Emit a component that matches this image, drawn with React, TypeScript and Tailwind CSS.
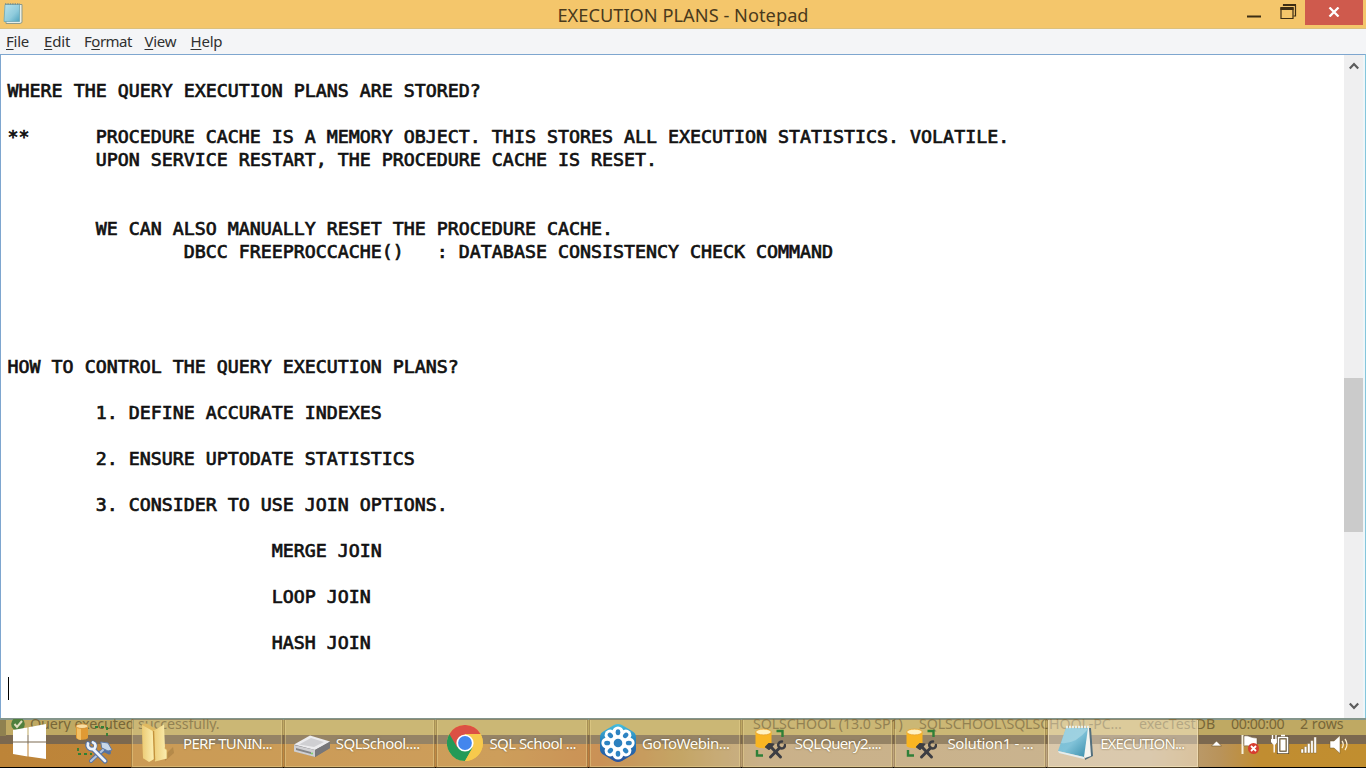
import React from "react";

const LINES = [
  "",
  "WHERE THE QUERY EXECUTION PLANS ARE STORED?",
  "",
  "**      PROCEDURE CACHE IS A MEMORY OBJECT. THIS STORES ALL EXECUTION STATISTICS. VOLATILE.",
  "        UPON SERVICE RESTART, THE PROCEDURE CACHE IS RESET.",
  "",
  "",
  "        WE CAN ALSO MANUALLY RESET THE PROCEDURE CACHE.",
  "                DBCC FREEPROCCACHE()   : DATABASE CONSISTENCY CHECK COMMAND",
  "",
  "",
  "",
  "",
  "HOW TO CONTROL THE QUERY EXECUTION PLANS?",
  "",
  "        1. DEFINE ACCURATE INDEXES",
  "",
  "        2. ENSURE UPTODATE STATISTICS",
  "",
  "        3. CONSIDER TO USE JOIN OPTIONS.",
  "",
  "                        MERGE JOIN",
  "",
  "                        LOOP JOIN",
  "",
  "                        HASH JOIN",
  "",
];

function NotepadSmall() {
  return (
    <svg width="20" height="22" viewBox="0 0 20 22">
      <defs>
        <linearGradient id="ns" x1="0" y1="0" x2="1" y2="1">
          <stop offset="0" stopColor="#b9e3ec" />
          <stop offset="0.6" stopColor="#8fcbdc" />
          <stop offset="1" stopColor="#4fa3be" />
        </linearGradient>
      </defs>
      <path d="M3 1.5h16v18l-2 1H3z" fill="#e9efe8" stroke="#8d9a8a" strokeWidth="1" />
      <path d="M2 1.5h14.5v17H1z" fill="url(#ns)" stroke="#6fa7b4" strokeWidth="0.8" />
      <path d="M2 1h15" stroke="#7b8f8c" strokeWidth="1.4" strokeDasharray="1.4 1" />
    </svg>
  );
}

function TitleBar() {
  return (
    <header className="grid h-[29px] shrink-0 grid-cols-[1fr_auto_1fr] border-b border-[#dcc07c] bg-[#f4c66b]">
      <div className="pl-[3px] pt-[3px]">
        <NotepadSmall />
      </div>
      <h1 className="pt-[2.5px] text-[18.2px] leading-[25px] tracking-[0.04px] text-[#4a3a1c]">
        EXECUTION PLANS - Notepad
      </h1>
      <div className="flex justify-end pr-[3px]">
        <svg width="52" height="25" viewBox="0 0 52 25" className="mr-[7px]" fill="none">
          <path d="M1 16.500h14" stroke="#3c2e14" strokeWidth="2" />
          <path d="M37.500 6V5h12v11h-2" stroke="#3c2e14" strokeWidth="1.2" />
          <path d="M37 5h13" stroke="#3c2e14" strokeWidth="2" />
          <path d="M35 8h12v10.500H35z" stroke="#3c2e14" strokeWidth="1.2" />
          <path d="M34.400 8.500h13.200" stroke="#3c2e14" strokeWidth="3" />
        </svg>
        <div className="flex h-[25px] w-[58px] items-center justify-center bg-[#cf5a4d]">
          <svg width="12" height="10" viewBox="0 0 12 10" className="mt-[-2px]">
            <path d="M1.500 0.500l9 9M10.500 0.500l-9 9" stroke="#fff" strokeWidth="2.3" />
          </svg>
        </div>
      </div>
    </header>
  );
}

function MenuBar() {
  return (
    <nav className="flex h-[25px] shrink-0 items-start bg-[#f4f5f7] pl-[6px] pt-[2px] text-[15px] leading-[20px] text-[#303030]">
      <span className="w-[38px] tracking-[-0.25px]"><u className="underline-offset-2">F</u>ile</span>
      <span className="w-[40px] tracking-[-0.15px]"><u className="underline-offset-2">E</u>dit</span>
      <span className="w-[60.500px] tracking-[-0.5px]">F<u className="underline-offset-2">o</u>rmat</span>
      <span className="w-[46px] tracking-[-0.3px]"><u className="underline-offset-2">V</u>iew</span>
      <span className="tracking-[-0.2px]"><u className="underline-offset-2">H</u>elp</span>
    </nav>
  );
}

function ScrollBar() {
  return (
    <div className="flex w-[19px] shrink-0 flex-col items-center bg-[#efeff0]">
      <svg width="10" height="8" viewBox="0 0 10 8" className="mt-[7px]">
        <path d="M0.800 6.500L5 2l4.200 4.500" stroke="#5c5c5c" strokeWidth="2.200" fill="none" />
      </svg>
      <div className="mt-[308px] h-[154px] w-full bg-[#cbcbcb]" />
      <svg width="10" height="8" viewBox="0 0 10 8" className="mb-[8px] mt-auto">
        <path d="M0.800 1.500L5 6l4.200-4.500" stroke="#5c5c5c" strokeWidth="2.200" fill="none" />
      </svg>
    </div>
  );
}

function FolderIcon() {
  return (
    <svg width="34" height="42" viewBox="0 0 34 42">
      <defs>
        <linearGradient id="fo" x1="0" x2="1">
          <stop offset="0" stopColor="#eccb74" />
          <stop offset="1" stopColor="#fbeeb0" />
        </linearGradient>
      </defs>
      <path d="M24 33l8-8 1 6-9 8z" fill="#8d6a33" opacity="0.350" />
      <path d="M1 2.500l5-1 8 5 0 30-5 3-7-3z" fill="#dfb961" />
      <path d="M1 3l9 5 3 2v27l-5 3-6-4z" fill="url(#fo)" />
      <path d="M12 9l11-6.500 1 24 2 1v9l-12 3z" fill="url(#fo)" />
      <path d="M12.500 9l1 29" stroke="#c2923c" strokeWidth="1.400" />
      <path d="M23.500 26l2.500 2v8.500" stroke="#d1a54e" strokeWidth="0.800" fill="none" />
    </svg>
  );
}

function DriveIcon() {
  return (
    <svg width="38" height="26" viewBox="0 0 38 26">
      <path d="M1 12L17 3l20 6v6L22 24 1 18z" fill="#777779" />
      <path d="M1 11.500L17 2.500l20 6L22 17z" fill="#ececee" />
      <path d="M6 11.500L18 5l13 4-10 5z" fill="#cfcfd2" />
      <path d="M1 12l21 5v7L1 18.500z" fill="#d0d0d3" />
      <path d="M3 15l15 4v2L3 17z" fill="#858587" />
      <path d="M22 17l15-8v6l-15 9z" fill="#77777a" />
      <circle cx="19" cy="20.500" r="1" fill="#77d265" />
    </svg>
  );
}

function ChromeIcon() {
  return (
    <svg width="36" height="36" viewBox="0 0 36 36">
      <circle cx="18" cy="18" r="18" fill="#f7c94c" />
      <path d="M18 18L2.410 9A18 18 0 0 0 18 36l8-14z" fill="#249a57" />
      <path d="M18 9h15.600A18 18 0 0 0 2.410 9l7.800 13.500L18 18z" fill="#dc5044" />
      <path d="M18 9.500h15.700A18 18 0 0 1 18 36l7.500-13z" fill="#f7c94c" />
      <circle cx="18" cy="18" r="8.600" fill="#fff" />
      <circle cx="18" cy="18" r="6.900" fill="#4386ed" />
    </svg>
  );
}

const PETALS = [0, 45, 90, 135, 180, 225, 270, 315];

function FlowerIcon() {
  return (
    <svg width="38" height="40" viewBox="-19 -20 38 40">
      <defs>
        <linearGradient id="fl" x1="0" y1="0" x2="0" y2="1">
          <stop offset="0" stopColor="#45bfdd" />
          <stop offset="0.5" stopColor="#2379b8" />
          <stop offset="1" stopColor="#2b529b" />
        </linearGradient>
      </defs>
      <path d="M-4-18q4-2 8 0l10 6q4 2 4 6V6q0 4-4 6L4 18q-4 2-8 0l-10-6q-4-2-4-6V-6q0-4 4-6z" fill="url(#fl)" />
      {PETALS.map((a) => (
        <circle key={a} cx="0" cy="-11" r="5.600" fill="#fff" transform={`rotate(${a})`} />
      ))}
      <circle r="9.500" fill="#fff" />
      {PETALS.map((a) => (
        <ellipse key={a} cx="0" cy="-10.800" rx="2.300" ry="3" fill="#2d83c2" transform={`rotate(${a})`} />
      ))}
      <circle r="4.300" fill="#2b80bf" />
    </svg>
  );
}

function SsmsLight() {
  return (
    <svg width="38" height="42" viewBox="0 0 38 42">
      <path d="M20 4h12v9M3 25v6h14" fill="none" stroke="#2f7f35" strokeWidth="1.800" strokeDasharray="3 3" />
      <path d="M1 3v11.500c0 3 12 3 12 0V3z" fill="#e09a34" />
      <path d="M2 4v11c0 1 3 2 4 2V5z" fill="#f3bf63" />
      <ellipse cx="7" cy="3.200" rx="6" ry="2.300" fill="#f8dea3" stroke="#cf8d30" strokeWidth="0.800" />
      <g strokeLinecap="round" strokeLinejoin="round" fill="none">
        <path d="M34 29.500L29 27l-7 5-6 6" stroke="#5573a3" strokeWidth="4" />
        <path d="M28 27L16 38" stroke="#b4c6de" strokeWidth="2.200" />
        <path d="M26 19l7 1 4 7-4 1-6-3z" fill="#c8d8ea" stroke="#5f7ba8" strokeWidth="1" />
        <path d="M13 20.500c-1 3 1 6 5 5.500L30 38" stroke="#5573a3" strokeWidth="5" />
        <path d="M18 19.500c3 1 3 4 1.500 6" stroke="#5573a3" strokeWidth="4" />
        <path d="M13 20.500c-1 3 1 6 5 5.500L30 38M18 19.500c3 1 3 4 1.500 6" stroke="#edf3fa" strokeWidth="2.800" />
      </g>
    </svg>
  );
}

function SsmsIcon() {
  return (
    <svg width="32" height="32" viewBox="0 0 32 32">
      <path d="M22.500 3h6v6M3 22v5.500h6" fill="none" stroke="#2f8038" strokeWidth="2.400" />
      <path d="M1.500 4v13.500c0 3.500 16 3.500 16 0V4z" fill="#f9b522" />
      <ellipse cx="9.500" cy="4" rx="7.800" ry="2.900" fill="#fff1c0" stroke="#e9a32c" strokeWidth="0.800" />
      <g stroke="#3d3e43" strokeLinecap="round" strokeLinejoin="round" fill="none">
        <path d="M11.500 19l3.500-3.500 5 .5-5 5.500z" fill="#3d3e43" strokeWidth="1.200" />
        <path d="M17 19l9.500 10" strokeWidth="3" />
        <path d="M25.500 20L16.500 29" strokeWidth="3" />
        <path d="M28 13.500c-3.500 0-5 4-2.500 6s5.500.5 5.500-2.500" strokeWidth="2.500" />
      </g>
    </svg>
  );
}

function NotepadLarge() {
  return (
    <svg width="38" height="36" viewBox="0 0 38 36">
      <defs>
        <linearGradient id="nl" x1="0" y1="0" x2="1" y2="1">
          <stop offset="0" stopColor="#79bfd6" />
          <stop offset="0.5" stopColor="#80c2d8" />
          <stop offset="1" stopColor="#378dab" />
        </linearGradient>
      </defs>
      <path d="M30 3h4l2 28-8 4z" fill="#536f7d" />
      <path d="M10 3h22l2 28-6 2z" fill="#f4f5f0" />
      <path d="M9 3h22l-4 29-26-6z" fill="url(#nl)" />
      <path d="M9 3L4 18Q18 20 31 4z" fill="#b3dce8" opacity="0.600" />
      <path d="M1 26l26 6v2L2 28z" fill="#e4eef0" />
      <path d="M9 2h23" stroke="#e9eee8" strokeWidth="2.500" strokeDasharray="2 1" />
    </svg>
  );
}

type Task = { label: string; icon: React.ReactNode; cls: string; text: string; active?: boolean };

const TASKS: Task[] = [
  { label: "PERF TUNIN...", icon: <FolderIcon />, cls: "ml-[8px] w-[42px]", text: "tracking-[-0.65px]" },
  { label: "SQLSchool....", icon: <DriveIcon />, cls: "ml-[7px] w-[43px] pt-[6px]", text: "tracking-[-0.5px]" },
  { label: "SQL School ...", icon: <ChromeIcon />, cls: "ml-[9px] w-[42px]", text: "tracking-[-0.55px]" },
  { label: "GoToWebin...", icon: <FlowerIcon />, cls: "ml-[8px] w-[43px]", text: "tracking-[-0.45px]" },
  { label: "SQLQuery2....", icon: <SsmsIcon />, cls: "ml-[10px] w-[41px] pt-[1px]", text: "tracking-[-0.7px]" },
  { label: "Solution1 - ...", icon: <SsmsIcon />, cls: "ml-[9px] w-[42px] pt-[1px]", text: "tracking-[-0.35px]" },
  { label: "EXECUTION...", icon: <NotepadLarge />, cls: "ml-[8px] w-[43px]", text: "tracking-[-0.85px]", active: true },
];

function Tray() {
  return (
    <svg width="146" height="47" viewBox="1204 720 146 47" fill="none" className="ml-[6.500px] shrink-0">
      <path d="M1211.500 746l5-5 5 5z" fill="#fff" stroke="#6d5429" strokeWidth="0.600" />
      <path d="M1242.500 735v19" stroke="#f8f2df" strokeWidth="2" />
      <path d="M1244 736c5-1 6 2 13 2v9c-6 0-8-2-13-1z" fill="#fff" stroke="#665332" strokeWidth="0.500" />
      <circle cx="1253.500" cy="748.500" r="5.500" fill="#d73d30" />
      <path d="M1251 746l5 5m0-5l-5 5" stroke="#fff" strokeWidth="1.800" />
      <path d="M1272.500 735v4m3.500-4v4" stroke="#fff" strokeWidth="1.400" />
      <path d="M1271 739h6.500v3l-2 2.500h-2.500l-2-2.500z" fill="#fff" />
      <path d="M1274.200 744v8.500" stroke="#fff" strokeWidth="1.400" />
      <path d="M1278.500 737.500h9v15h-9z" fill="#8c7446" stroke="#57472b" strokeWidth="3.200" />
      <path d="M1278.500 737.500h9v15h-9zM1281 735.500h4" stroke="#fff" strokeWidth="1.600" />
      <path d="M1280.500 739.500h5v11h-5z" fill="#fff" />
      <g fill="#fff" stroke="#765c2b" strokeWidth="0.400">
        <path d="M1301 749h2.500v4h-2.500zM1304.300 746.500h2.500v6.500h-2.500zM1307.500 743.500h2.500v9.500h-2.500zM1310.700 740.500h2.500v12.500h-2.500zM1313.900 737h2.500v16h-2.500z" />
      </g>
      <path d="M1330 741h4l6-5.500v18l-6-5.500h-4z" fill="#fff" stroke="#6e5427" strokeWidth="0.500" />
      <path d="M1342 741q2.500 3.500 0 7M1345 739q4 5.500 0 11" stroke="#fff0cf" strokeWidth="1.300" />
    </svg>
  );
}

function TaskBar() {
  return (
    <footer className="relative flex h-[50px] shrink-0 flex-col border-b border-t-2 border-b-black border-t-[#84958b] bg-[linear-gradient(90deg,#bd8438_0px,#c18a43_500px,#bd7a3c_600px,#b69350_680px,#bda27c_760px,#bca585_1150px,#b9935a_1220px,#c18d31_1260px,#c18e2f_1366px)]">
      <div className="absolute inset-0 flex flex-col">
        <div className="h-[15px] bg-[#bfa963]" />
        <div className="h-[9px] bg-[#7b684f]" />
      </div>
      <div className="absolute left-0 top-0 h-[16px] w-[6px] bg-[#8f8150]" />
      <div className="absolute inset-x-0 top-[-5px] flex h-[17px] items-center text-[14.300px] leading-[17px] text-[#776638] [clip-path:inset(4px_0_0_0)]">
        <svg width="14" height="14" viewBox="0 0 14 14" className="ml-[11px] mr-[5px] shrink-0">
          <circle cx="7" cy="7" r="6.800" fill="#4f7f3d" />
          <path d="M3.500 7l2.500 3 5-6" stroke="#e1dec0" strokeWidth="2" fill="none" />
        </svg>
        <span className="w-[723px] shrink-0 tracking-[-0.100px]">Query executed successfully.</span>
        <span className="w-[166px] shrink-0 whitespace-nowrap text-[14.200px] tracking-[-0.100px]">SQLSCHOOL (13.0 SP1)</span>
        <span className="w-[220px] shrink-0 whitespace-nowrap text-[14.200px] tracking-[-0.100px]">SQLSCHOOL\SQLSCHOOL-PC...</span>
        <span className="w-[92px] shrink-0 text-[14.200px]">execTestDB</span>
        <span className="w-[69px] shrink-0 text-[14.200px] tracking-[-0.400px]">00:00:00</span>
        <span className="shrink-0 text-[14.200px]">2 rows</span>
      </div>
      <div className="relative flex h-[47px]">
        <div className="flex w-[75px] shrink-0 pl-[13px] pt-[4px]">
          <svg width="34" height="36" viewBox="0 0 34 36" fill="#fff">
            <path d="M0 6l14.500-2.500v14H0zM15.500 3.300L33 0v17.500H15.500zM0 18.500h14.500v14L0 30zM15.500 18.500H33V35l-17.500-2.400z" />
          </svg>
        </div>
        <div className="flex w-[57px] shrink-0 pt-[3px]">
          <SsmsLight />
        </div>
        <div className="flex shrink-0 gap-[3.200px]">
          {TASKS.map((t) => (
            <div
              key={t.label}
              className={
                "flex w-[149.500px] items-center border border-t-0 outline outline-1 outline-[#92784a]/50 " +
                (t.active ? "border-[#f0dfb5]/80 bg-[#fff5df]/45" : "border-[#ead490]/45 bg-[#fff0bd]/20")
              }
            >
              <span className={"flex shrink-0 items-center justify-start " + t.cls}>{t.icon}</span>
              <span className={"whitespace-nowrap text-[15px] leading-[20px] text-[#fffdf5] [text-shadow:0_0_2px_#705c35] " + t.text}>{t.label}</span>
            </div>
          ))}
        </div>
        <Tray />
      </div>
    </footer>
  );
}

export default function App() {
  return (
    <main className="flex h-[768px] w-[1366px] flex-col overflow-hidden bg-white font-['Noto_Sans','Open_Sans',sans-serif]">
      <TitleBar />
      <MenuBar />
      <section className="flex min-h-0 flex-1 border-l border-r border-t border-[#7ea6cf] border-r-[#84c6dc]">
        <div className="min-w-0 flex-1 pl-[6.600px] pt-px font-['DejaVu_Sans_Mono',monospace] text-[18.290px] leading-[23px] text-[#111] [-webkit-text-stroke:0.700px_#111]">
          {LINES.map((l, i) => (
            <div key={i} className="h-[23px] whitespace-pre">{l}</div>
          ))}
          <div className="flex h-[23px] items-center">
            <div className="h-[23px] w-px bg-black" />
          </div>
        </div>
        <ScrollBar />
        <div className="w-[2px] bg-[#eef6f9]" />
      </section>
      <TaskBar />
    </main>
  );
}
